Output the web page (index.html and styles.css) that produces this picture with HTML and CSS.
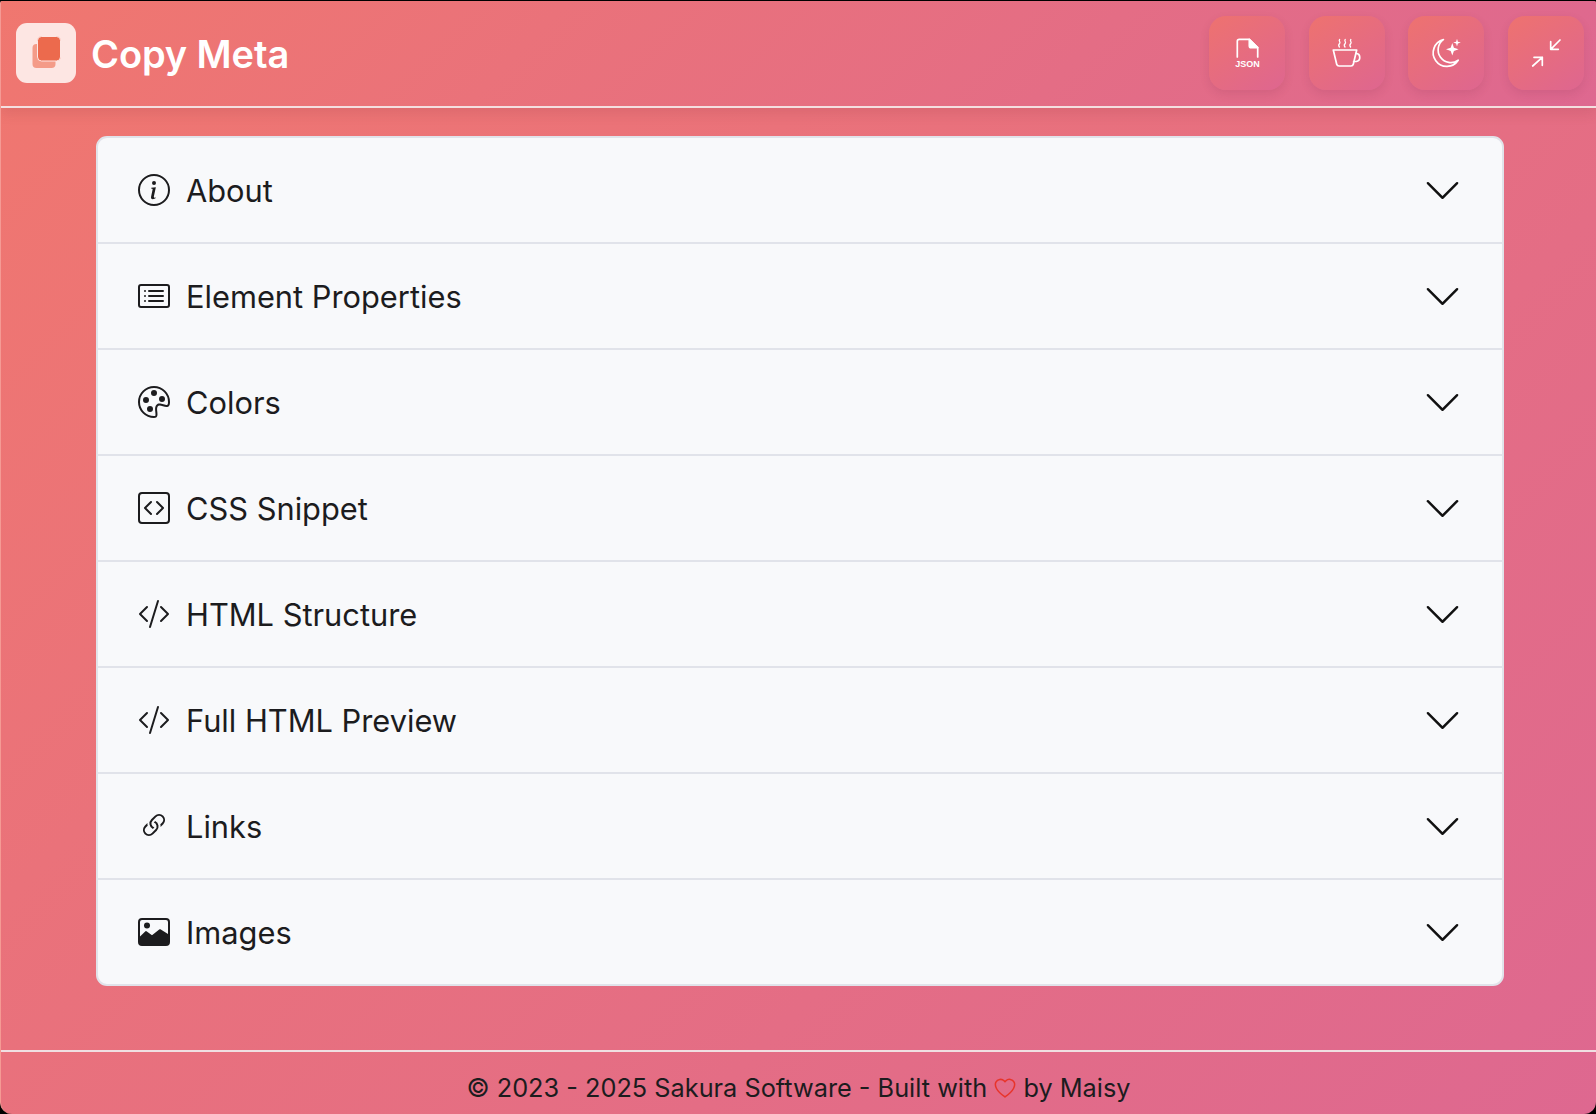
FILE: index.html
```html
<!DOCTYPE html>
<html lang="en">
  <head>
    <meta charset="UTF-8" />
    <meta name="viewport" content="width=device-width, initial-scale=1.0" />
    <title>Copy Meta</title>
    <link rel="stylesheet" href="styles.css">
  </head>
  <body>
    <div class="window">
      <header class="topbar">
        <div class="brand">
          <div class="logo">
            <svg viewBox="0 0 60 60" width="60" height="60">
              <rect x="16.5" y="21" width="23" height="24" rx="4" fill="#f49b88" />
              <rect x="21.5" y="13.5" width="23" height="24.5" rx="4" fill="#ec6a4d" stroke="#fde6e3" stroke-width="1" />
            </svg>
          </div>
          <h1>Copy Meta</h1>
        </div>
        <nav class="actions">
          <button>
            <svg viewBox="0 0 32 32" width="32" height="32" class="stroke-icon">
              <path d="M6.3 20V4.3a2 2 0 0 1 2-2h10l8.4 8.4V20" />
              <path d="M18.3 2.3l8.4 8.4h-6.4a2 2 0 0 1-2-2z" fill="#fff" />
              <text x="16.5" y="29.5" class="json">JSON</text>
            </svg>
          </button>
          <button>
            <svg viewBox="0 0 32 32" width="32" height="32" class="stroke-icon">
              <path d="M2.3 13h23.4l-3.4 14.2a2.4 2.4 0 0 1-2.3 1.8H8a2.4 2.4 0 0 1-2.3-1.8z" />
              <path d="M25 16.4a4 4 0 0 1 .6 7.9l-3 .2" />
              <path class="steam" d="M8.6 2.5c-1.4 1.3 1.4 2.7 0 4s-1 2.5-.2 3.5M14.2 2.5c-1.4 1.3 1.4 2.7 0 4s-1 2.5-.2 3.5M19.8 2.5c-1.4 1.3 1.4 2.7 0 4s-1 2.5-.2 3.5" />
            </svg>
          </button>
          <button>
            <svg viewBox="0 0 32 32" width="32" height="32" class="stroke-icon">
              <path d="M13.4 2.6A13.6 13.6 0 1 0 28.2 23.2 12.6 12.6 0 0 1 13.4 2.6z" />
              <path class="fill-only" d="M22.3 6l1.6 4.7 4.7 1.6-4.7 1.6-1.6 4.7-1.6-4.7-4.7-1.6 4.7-1.6zM27 1.8l.9 2.9 2.9.9-2.9.9-.9 2.9-.9-2.9-2.9-.9 2.9-.9z" />
            </svg>
          </button>
          <button>
            <svg viewBox="0 0 32 32" width="32" height="32" class="stroke-icon">
              <path d="M30 3l-9.3 9.3M20.7 4.7v7.6h7.6" />
              <path d="M2.7 29l9.6-8.7M4 20.3h8.3v8" />
            </svg>
          </button>
        </nav>
      </header>

      <main>
        <section class="accordion">
          <div class="row">
            <svg class="icon" viewBox="0 0 16 16"><path d="M8 15A7 7 0 1 1 8 1a7 7 0 0 1 0 14m0 1A8 8 0 1 0 8 0a8 8 0 0 0 0 16" /><path d="m8.93 6.588-2.29.287-.082.38.45.083c.294.07.352.176.288.469l-.738 3.468c-.194.897.105 1.319.808 1.319.545 0 1.178-.252 1.465-.598l.088-.416c-.2.176-.492.246-.686.246-.275 0-.375-.193-.304-.533zM9 4.5a1 1 0 1 1-2 0 1 1 0 0 1 2 0" /></svg>
            <span class="label">About</span>
            <svg class="chevron" viewBox="0 0 16 16"><path d="M1.646 4.646a.5.5 0 0 1 .708 0L8 10.293l5.646-5.647a.5.5 0 0 1 .708.708l-6 6a.5.5 0 0 1-.708 0l-6-6a.5.5 0 0 1 0-.708" /></svg>
          </div>
          <div class="row">
            <svg class="icon" viewBox="0 0 16 16"><path d="M14.5 3a.5.5 0 0 1 .5.5v9a.5.5 0 0 1-.5.5h-13a.5.5 0 0 1-.5-.5v-9a.5.5 0 0 1 .5-.5zm-13-1A1.5 1.5 0 0 0 0 3.5v9A1.5 1.5 0 0 0 1.5 14h13a1.5 1.5 0 0 0 1.5-1.5v-9A1.5 1.5 0 0 0 14.5 2z" /><path d="M5 8a.5.5 0 0 1 .5-.5h7a.5.5 0 0 1 0 1h-7A.5.5 0 0 1 5 8m0-2.5a.5.5 0 0 1 .5-.5h7a.5.5 0 0 1 0 1h-7a.5.5 0 0 1-.5-.5m0 5a.5.5 0 0 1 .5-.5h7a.5.5 0 0 1 0 1h-7a.5.5 0 0 1-.5-.5m-1-5a.5.5 0 1 1-1 0 .5.5 0 0 1 1 0M4 8a.5.5 0 1 1-1 0 .5.5 0 0 1 1 0m0 2.5a.5.5 0 1 1-1 0 .5.5 0 0 1 1 0" /></svg>
            <span class="label">Element Properties</span>
            <svg class="chevron" viewBox="0 0 16 16"><path d="M1.646 4.646a.5.5 0 0 1 .708 0L8 10.293l5.646-5.647a.5.5 0 0 1 .708.708l-6 6a.5.5 0 0 1-.708 0l-6-6a.5.5 0 0 1 0-.708" /></svg>
          </div>
          <div class="row">
            <svg class="icon" viewBox="0 0 16 16"><path d="M8 5a1.5 1.5 0 1 0 0-3 1.5 1.5 0 0 0 0 3m4 3a1.5 1.5 0 1 0 0-3 1.5 1.5 0 0 0 0 3M5.5 7a1.5 1.5 0 1 1-3 0 1.5 1.5 0 0 1 3 0m.5 6a1.5 1.5 0 1 0 0-3 1.5 1.5 0 0 0 0 3" /><path d="M16 8c0 3.15-1.866 2.585-3.567 2.07C11.42 9.763 10.465 9.473 10 10c-.603.683-.475 1.819-.351 2.92C9.826 14.495 9.996 16 8 16a8 8 0 1 1 8-8m-8 7c.611 0 .654-.171.655-.176.078-.146.124-.464.07-1.119-.014-.168-.037-.37-.061-.591-.052-.464-.112-1.005-.118-1.462-.01-.707.083-1.61.704-2.314.369-.417.845-.578 1.272-.618.404-.038.812.026 1.16.104.343.077.702.186 1.025.284l.028.008c.346.105.658.199.953.266.653.148.904.083.991.024C14.717 9.38 15 9.161 15 8a7 7 0 1 0-7 7" /></svg>
            <span class="label">Colors</span>
            <svg class="chevron" viewBox="0 0 16 16"><path d="M1.646 4.646a.5.5 0 0 1 .708 0L8 10.293l5.646-5.647a.5.5 0 0 1 .708.708l-6 6a.5.5 0 0 1-.708 0l-6-6a.5.5 0 0 1 0-.708" /></svg>
          </div>
          <div class="row">
            <svg class="icon" viewBox="0 0 16 16"><path d="M14 1a1 1 0 0 1 1 1v12a1 1 0 0 1-1 1H2a1 1 0 0 1-1-1V2a1 1 0 0 1 1-1zM2 0a2 2 0 0 0-2 2v12a2 2 0 0 0 2 2h12a2 2 0 0 0 2-2V2a2 2 0 0 0-2-2z" /><path d="M6.854 4.646a.5.5 0 0 1 0 .708L4.207 8l2.647 2.646a.5.5 0 0 1-.708.708l-3-3a.5.5 0 0 1 0-.708l3-3a.5.5 0 0 1 .708 0m2.292 0a.5.5 0 0 0 0 .708L11.793 8l-2.647 2.646a.5.5 0 0 0 .708.708l3-3a.5.5 0 0 0 0-.708l-3-3a.5.5 0 0 0-.708 0" /></svg>
            <span class="label">CSS Snippet</span>
            <svg class="chevron" viewBox="0 0 16 16"><path d="M1.646 4.646a.5.5 0 0 1 .708 0L8 10.293l5.646-5.647a.5.5 0 0 1 .708.708l-6 6a.5.5 0 0 1-.708 0l-6-6a.5.5 0 0 1 0-.708" /></svg>
          </div>
          <div class="row">
            <svg class="icon" viewBox="0 0 16 16"><path d="M10.478 1.647a.5.5 0 1 0-.956-.294l-4 13a.5.5 0 0 0 .956.294zM4.854 4.146a.5.5 0 0 1 0 .708L1.707 8l3.147 3.146a.5.5 0 0 1-.708.708l-3.5-3.5a.5.5 0 0 1 0-.708l3.5-3.5a.5.5 0 0 1 .708 0m6.292 0a.5.5 0 0 0 0 .708L14.293 8l-3.147 3.146a.5.5 0 0 0 .708.708l3.5-3.5a.5.5 0 0 0 0-.708l-3.5-3.5a.5.5 0 0 0-.708 0" /></svg>
            <span class="label">HTML Structure</span>
            <svg class="chevron" viewBox="0 0 16 16"><path d="M1.646 4.646a.5.5 0 0 1 .708 0L8 10.293l5.646-5.647a.5.5 0 0 1 .708.708l-6 6a.5.5 0 0 1-.708 0l-6-6a.5.5 0 0 1 0-.708" /></svg>
          </div>
          <div class="row">
            <svg class="icon" viewBox="0 0 16 16"><path d="M10.478 1.647a.5.5 0 1 0-.956-.294l-4 13a.5.5 0 0 0 .956.294zM4.854 4.146a.5.5 0 0 1 0 .708L1.707 8l3.147 3.146a.5.5 0 0 1-.708.708l-3.5-3.5a.5.5 0 0 1 0-.708l3.5-3.5a.5.5 0 0 1 .708 0m6.292 0a.5.5 0 0 0 0 .708L14.293 8l-3.147 3.146a.5.5 0 0 0 .708.708l3.5-3.5a.5.5 0 0 0 0-.708l-3.5-3.5a.5.5 0 0 0-.708 0" /></svg>
            <span class="label">Full HTML Preview</span>
            <svg class="chevron" viewBox="0 0 16 16"><path d="M1.646 4.646a.5.5 0 0 1 .708 0L8 10.293l5.646-5.647a.5.5 0 0 1 .708.708l-6 6a.5.5 0 0 1-.708 0l-6-6a.5.5 0 0 1 0-.708" /></svg>
          </div>
          <div class="row">
            <svg class="icon" viewBox="0 0 16 16"><path d="M4.715 6.542 3.343 7.914a3 3 0 1 0 4.243 4.243l1.828-1.829A3 3 0 0 0 8.586 5.5L8 6.086a1 1 0 0 0-.154.199 2 2 0 0 1 .861 3.337L6.88 11.45a2 2 0 1 1-2.83-2.83l.793-.792a4 4 0 0 1-.128-1.287z" /><path d="M6.586 4.672A3 3 0 0 0 7.414 9.5l.775-.776a2 2 0 0 1-.896-3.346L9.12 3.55a2 2 0 1 1 2.83 2.83l-.793.792c.112.42.155.855.128 1.287l1.372-1.372a3 3 0 1 0-4.243-4.243z" /></svg>
            <span class="label">Links</span>
            <svg class="chevron" viewBox="0 0 16 16"><path d="M1.646 4.646a.5.5 0 0 1 .708 0L8 10.293l5.646-5.647a.5.5 0 0 1 .708.708l-6 6a.5.5 0 0 1-.708 0l-6-6a.5.5 0 0 1 0-.708" /></svg>
          </div>
          <div class="row">
            <svg class="icon" viewBox="0 0 16 16"><path fill-rule="evenodd" d="M2 1h12a2 2 0 0 1 2 2v10a2 2 0 0 1-2 2H2a2 2 0 0 1-2-2V3a2 2 0 0 1 2-2zm0 1a1 1 0 0 0-1 1v7.2l2.6-2.5a.5.5 0 0 1 .65-.05L7 9.6l3.6-2.9a.5.5 0 0 1 .6-.03L15 9V3a1 1 0 0 0-1-1z" /><circle cx="4.5" cy="4.8" r="1.5" /></svg>
            <span class="label">Images</span>
            <svg class="chevron" viewBox="0 0 16 16"><path d="M1.646 4.646a.5.5 0 0 1 .708 0L8 10.293l5.646-5.647a.5.5 0 0 1 .708.708l-6 6a.5.5 0 0 1-.708 0l-6-6a.5.5 0 0 1 0-.708" /></svg>
          </div>
        </section>
      </main>

      <footer>
        <p>© 2023 - 2025 Sakura Software - Built with
          <svg class="heart" viewBox="0 0 16 16"><path d="m8 2.748-.717-.737C5.6.281 2.514.878 1.4 3.053c-.523 1.023-.641 2.5.314 4.385.92 1.815 2.834 3.989 6.286 6.357 3.452-2.368 5.365-4.542 6.286-6.357.955-1.886.838-3.362.314-4.385C13.486.878 10.4.28 8.717 2.01z" fill="none" stroke="#e8342a" stroke-width="1.1" /></svg>
          by Maisy</p>
      </footer>
    </div>
  </body>
</html>
```

FILE: styles.css
```css
* {
  box-sizing: border-box;
  margin: 0;
  padding: 0;
}

html,
body {
  height: 100%;
  background: #000;
  overflow: hidden;
}

body {
  padding-top: 1px;
  font-family: Inter, "Liberation Sans", sans-serif;
  color: #1c1c1e;
}

.window {
  display: flex;
  flex-direction: column;
  height: 100%;
  border-left: 1px solid #f59a94;
  border-radius: 2px 2px 12px 12px;
  overflow: hidden;
  background: linear-gradient(135deg, #f0776f, #de6890);
}

.topbar {
  display: flex;
  justify-content: space-between;
  align-items: center;
  height: 107px;
  padding: 0 12px 1px 15px;
  border-bottom: 2px solid #f4dfe0;
  background: linear-gradient(135deg, #f0776f, #de6890);
  box-shadow: 0 5px 12px rgba(120, 40, 60, 0.14);
}

.brand {
  display: flex;
  align-items: center;
  gap: 15px;
}

.logo {
  display: flex;
  width: 60px;
  height: 60px;
  border-radius: 11px;
  background: #fde6e3;
}

h1 {
  padding-top: 2px;
  font-size: 38px;
  font-weight: 600;
  letter-spacing: -0.1px;
  color: #fff;
}

.actions {
  display: flex;
  gap: 23.7px;
}

.actions button {
  display: flex;
  align-items: center;
  justify-content: center;
  width: 76px;
  height: 74px;
  border: 0;
  border-radius: 17px;
  background: linear-gradient(145deg, #ee726f, #de6690);
  box-shadow: 0 4px 10px rgba(120, 40, 70, 0.14);
}

.stroke-icon {
  fill: none;
  stroke: #fff;
  stroke-width: 1.7;
  stroke-linecap: round;
  stroke-linejoin: round;
}

.stroke-icon .fill-only {
  fill: #fff;
  stroke: none;
}

.stroke-icon .steam {
  stroke-width: 1.3;
}

.json {
  fill: #fff;
  stroke: none;
  font-size: 9px;
  font-weight: 600;
  text-anchor: middle;
}

main {
  flex: 1;
  padding: 28px 92px 0 95px;
}

.accordion {
  border: 2px solid #e1e3ea;
  border-radius: 11px;
  overflow: hidden;
  background: #f8f9fb;
}

.row {
  display: flex;
  align-items: center;
  gap: 16px;
  height: 106px;
  padding: 0 40px 0 40px;
  border-bottom: 2px solid #e1e3ea;
}

.row:last-child {
  height: 104px;
  border-bottom: 0;
}

.icon {
  width: 32px;
  height: 32px;
  fill: #1c1c1e;
}

.label {
  flex: 1;
  font-size: 30.8px;
}

.chevron {
  width: 39px;
  height: 39px;
  fill: #111;
}

footer {
  display: flex;
  justify-content: center;
  align-items: center;
  height: 64px;
  padding-top: 8px;
  border-top: 2px solid #f0dfe2;
}

footer p {
  font-size: 25.3px;
}

.heart {
  width: 22px;
  height: 22px;
  vertical-align: -3px;
}
```
